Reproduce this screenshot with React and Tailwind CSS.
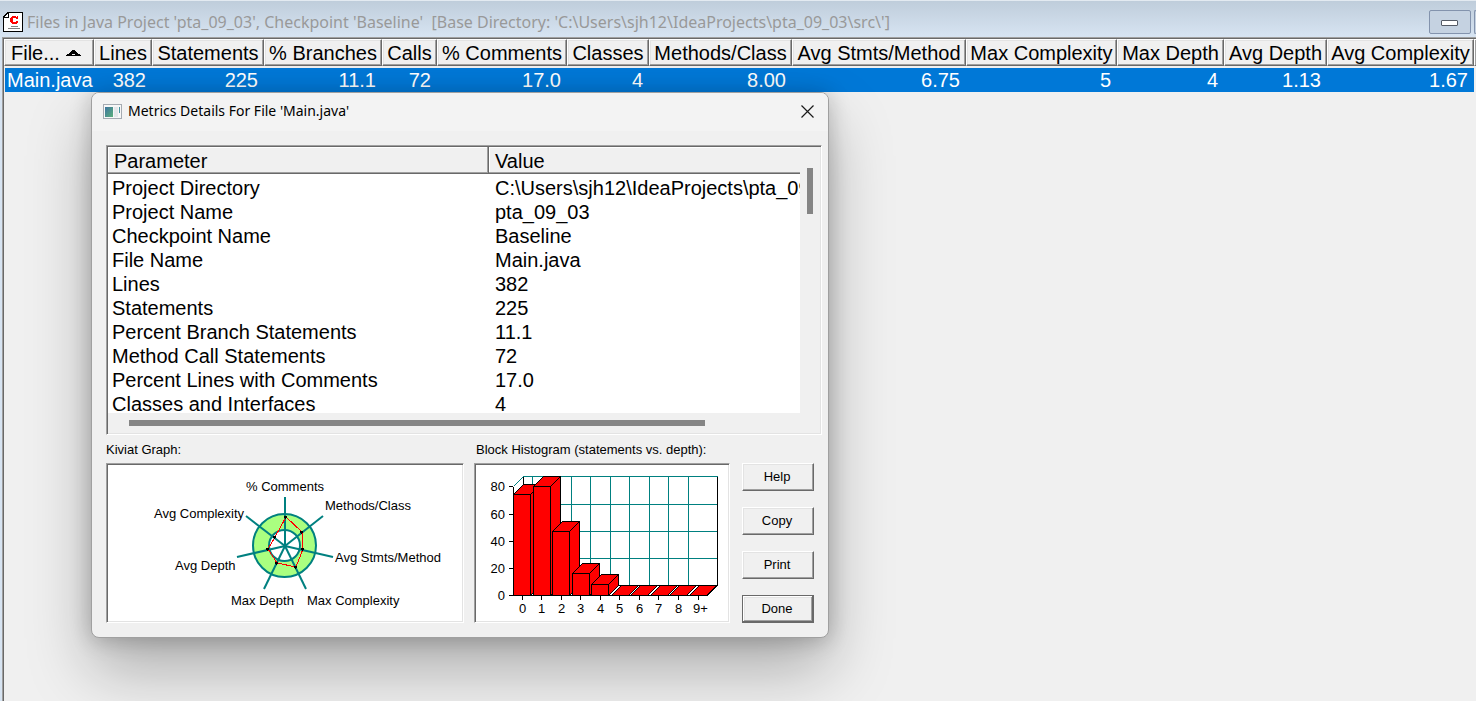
import React from 'react';

const columns = [
    { name: 'File...', value: 'Main.java', width: 90 },
    { name: 'Lines', value: '382', width: 58 },
    { name: 'Statements', value: '225', width: 112 },
    { name: '% Branches', value: '11.1', width: 118 },
    { name: 'Calls', value: '72', width: 55 },
    { name: '% Comments', value: '17.0', width: 130 },
    { name: 'Classes', value: '4', width: 82 },
    { name: 'Methods/Class', value: '8.00', width: 143 },
    { name: 'Avg Stmts/Method', value: '6.75', width: 174 },
    { name: 'Max Complexity', value: '5', width: 151 },
    { name: 'Max Depth', value: '4', width: 107 },
    { name: 'Avg Depth', value: '1.13', width: 103 },
    { name: 'Avg Complexity', value: '1.67', width: 147 },
];

const details = [
    ['Project Directory', 'C:\\Users\\sjh12\\IdeaProjects\\pta_09_03\\src\\'],
    ['Project Name', 'pta_09_03'],
    ['Checkpoint Name', 'Baseline'],
    ['File Name', 'Main.java'],
    ['Lines', '382'],
    ['Statements', '225'],
    ['Percent Branch Statements', '11.1'],
    ['Method Call Statements', '72'],
    ['Percent Lines with Comments', '17.0'],
    ['Classes and Interfaces', '4'],
];

const headerCell =
    'h-[27px] p-0 pt-px font-normal whitespace-nowrap bg-[#f0f0f0] border-t border-l border-white border-r border-b border-r-[#696969] border-b-[#696969] shadow-[inset_-1px_-1px_0_#a0a0a0,inset_1px_1px_0_#e3e3e3]';

const sunken =
    'border border-t-[#a0a0a0] border-l-[#a0a0a0] border-r-white border-b-white shadow-[inset_1px_1px_0_#696969,inset_-1px_-1px_0_#e3e3e3]';

const ProjectIcon = () => (
    <svg width="20" height="20" viewBox="0 0 20 20" shapeRendering="crispEdges">
        <path d="M5.5 0.5H19.5V19.5H0.5V5.5Z" fill="#fff" stroke="#000" />
        <path d="M0 6V4H1V3H2V2H3V1H4V0H6V6Z" fill="#000" />
        <path d="M2 4H3V3H4V2H5V5H2Z" fill="#fff" />
        <path d="M9 4H13V5H14V4H15V7H13V6H10V10H13V9H15V11H14V12H9V11H8V10H7V6H8V5H9Z" fill="#f00" />
        <path d="M8 14.5H15M5 16.5H17" stroke="#808080" />
    </svg>
);

const DialogIcon = () => (
    <svg width="19" height="15" viewBox="0 0 19 15" shapeRendering="crispEdges">
        <defs>
            <linearGradient id="pane" x1="0" y1="0" x2="1" y2="1">
                <stop offset="0" stopColor="#3d74a0" />
                <stop offset="1" stopColor="#5cb07c" />
            </linearGradient>
        </defs>
        <rect x="0.5" y="0.5" width="18" height="14" fill="#f7f7f7" stroke="#a5abb2" />
        <rect x="2" y="3" width="8" height="10" fill="url(#pane)" />
        <rect x="11" y="3" width="4" height="10" fill="#e4e7ea" />
        <rect x="16" y="3" width="1" height="6" fill="#4a94a0" />
    </svg>
);

const SortArrow = () => (
    <svg width="15" height="6" viewBox="0 0 15 6" shapeRendering="crispEdges" className="shrink-0">
        <path d="M0 6V5H1V4H3V3H4V2H5V1H6V0H9V1H10V2H11V3H12V4H14V5H15V6Z" fill="#000" />
        <path d="M6 4H9V5H6Z" fill="#f0f0f0" />
    </svg>
);

const spokes = [
    [177, 32],
    [215, 51],
    [225, 92],
    [198, 124],
    [156, 124],
    [129, 92],
    [138, 51],
];

const scores = [
    [178, 52],
    [194, 67],
    [195, 84],
    [188, 102],
    [169, 98],
    [160, 84],
    [167, 72],
];

const kiviatLabels = [
    ['% Comments', 138, 26],
    ['Methods/Class', 217, 45],
    ['Avg Stmts/Method', 227, 97],
    ['Max Complexity', 199, 140],
    ['Max Depth', 123, 140],
    ['Avg Depth', 67, 105],
    ['Avg Complexity', 46, 53],
];

const KiviatGraph = () => (
    <svg width="354" height="156" viewBox="0 0 354 156" className="block text-[13px]">
        <g fill="none">
            <circle cx="176.5" cy="80.5" r="24" stroke="#aaff80" strokeWidth="16" />
            <circle cx="176.5" cy="80.5" r="31.5" stroke="#008080" strokeWidth="2" />
            <circle cx="176.5" cy="80.5" r="15.5" stroke="#008080" strokeWidth="2" />
            {spokes.map(([x, y]) => (
                <line key={`${x}-${y}`} x1="177" y1="81" x2={x} y2={y} stroke="#008080" strokeWidth="2" />
            ))}
            <polygon points={scores.map((p) => p.join(',')).join(' ')} stroke="#f00" shapeRendering="crispEdges" />
            {scores.map(([x, y]) => (
                <path key={`${x}-${y}`} d={`M${x - 2} ${y - 1}h3v2h-1v1h-1v-1h-1z`} fill="#000" />
            ))}
        </g>
        {kiviatLabels.map(([label, x, y]) => (
            <text key={label} x={x} y={y}>{label}</text>
        ))}
    </svg>
);

const bars = [
    { x: 37.5, top: 29.5, tick: 46.5 },
    { x: 57.5, top: 21.5, tick: 65.5 },
    { x: 76.5, top: 66.5, tick: 85.5 },
    { x: 96.5, top: 108.5, tick: 104.5 },
    { x: 115.5, top: 119.5, tick: 124.5 },
    { x: 135.5, top: 130.5, tick: 143.5 },
    { x: 154.5, top: 130.5, tick: 163.5 },
    { x: 174.5, top: 130.5, tick: 182.5 },
    { x: 193.5, top: 130.5, tick: 202.5 },
    { x: 213.5, top: 130.5, tick: 222.5 },
];

const yTicks = [
    ['80', 21.5],
    ['60', 49.5],
    ['40', 76.5],
    ['20', 103.5],
    ['0', 130.5],
];

const Histogram = () => (
    <svg width="252" height="156" viewBox="0 0 252 156" className="block text-[13px]">
        <g shapeRendering="crispEdges" fill="none">
            <path
                d="M47.5 11.5H241.5M47.5 39.5H241.5M47.5 66.5H241.5M47.5 93.5H241.5M56.5 11.5V120M75.5 11.5V120M95.5 11.5V120M114.5 11.5V120M134.5 11.5V120M153.5 11.5V120M173.5 11.5V120M192.5 11.5V120M212.5 11.5V120M37.5 21.5L47.5 11.5"
                stroke="#008080"
            />
            <path d="M47.5 11.5V30M241.5 11.5V120.5H48M37.5 21.5V130.5M33 130.5H231.5L241.5 120.5" stroke="#000" />
            {bars.map(({ x, top }) => (
                <g key={x} fill="#f00" stroke="#000">
                    <path d={`M${x} ${top}l10 -10h17l-10 10z`} />
                    <path d={`M${x + 17} ${top}l10 -10V120.5l-10 10z`} />
                    <path d={`M${x} ${top}h17V130.5h-17z`} />
                </g>
            ))}
            {yTicks.map(([label, y]) => (
                <line key={label} x1="33" y1={y} x2="37" y2={y} stroke="#000" />
            ))}
            {bars.map(({ tick }) => (
                <line key={tick} x1={tick} y1="131" x2={tick} y2="135" stroke="#000" />
            ))}
        </g>
        {yTicks.map(([label, y]) => (
            <text key={label} x="29" y={y + 4.5} textAnchor="end">{label}</text>
        ))}
        {bars.map(({ tick }, i) => (
            <text key={tick} x={i === 9 ? tick + 2 : tick} y="148" textAnchor="middle">
                {i === 9 ? '9+' : i}
            </text>
        ))}
    </svg>
);

const DialogButton = ({ children, primary }) => (
    <button
        type="button"
        className={
            primary
                ? 'h-7 w-[72px] border border-[#696969] bg-[#f0f0f0] pr-0.5 shadow-[inset_-1px_-1px_0_#696969,inset_1px_1px_0_#fff,inset_-2px_-2px_0_#a0a0a0,inset_2px_2px_0_#e3e3e3]'
                : 'h-7 w-[72px] border border-t-white border-l-white border-r-[#696969] border-b-[#696969] bg-[#f0f0f0] pr-0.5 shadow-[inset_-1px_-1px_0_#a0a0a0,inset_1px_1px_0_#e3e3e3]'
        }
    >
        {children}
    </button>
);

const MetricsDialog = () => (
    <section
        role="dialog"
        aria-labelledby="dialog-title"
        className="absolute top-[92px] left-[91px] w-[738px] overflow-hidden rounded-lg border border-[#a0a0a0] bg-[#f0f0f0] text-[13px] shadow-[0_32px_64px_rgba(0,0,0,0.28),0_2px_21px_rgba(0,0,0,0.22)]"
    >
        <header className="flex h-[38px] items-center gap-1.5 bg-[#f3f3f3] pr-3.5 pb-0.5 pl-[11px]">
            <DialogIcon />
            <h2 id="dialog-title" className="font-['Noto_Sans',sans-serif] text-sm">
                Metrics Details For File 'Main.java'
            </h2>
            <button type="button" aria-label="Close" className="ml-auto">
                <svg width="13" height="13" viewBox="0 0 13 13" className="block">
                    <path d="M0.5 0.5L12.5 12.5M12.5 0.5L0.5 12.5" stroke="#1a1a1a" strokeWidth="1.2" />
                </svg>
            </button>
        </header>

        <div className="px-3.5 pt-3.5 pb-3.5">
            <div className={`mr-[-8px] w-[716px] p-px ${sunken}`}>
                <div className="flex">
                    <div className="h-[266px] flex-1 overflow-hidden bg-white">
                        <table className="w-full table-fixed border-separate border-spacing-0 text-left text-xl leading-6">
                            <colgroup>
                                <col className="w-[381px]" />
                                <col />
                            </colgroup>
                            <thead>
                                <tr>
                                    <th className="h-[27px] border-r border-b border-[#696969] bg-[#f0f0f0] p-0 pt-0.5 pl-1.5 font-normal shadow-[inset_-1px_-1px_0_#a0a0a0,inset_1px_1px_0_#fff]">
                                        Parameter
                                    </th>
                                    <th className="h-[27px] border-b border-[#696969] bg-[#f0f0f0] p-0 pt-0.5 pl-1.5 font-normal shadow-[inset_0_-1px_0_#a0a0a0,inset_1px_1px_0_#fff]">
                                        Value
                                    </th>
                                </tr>
                            </thead>
                            <tbody>
                                <tr aria-hidden="true"><td className="h-0.5 p-0" /></tr>
                                {details.map(([name, value]) => (
                                    <tr key={name}>
                                        <td className="h-6 p-0 pl-1 whitespace-nowrap">{name}</td>
                                        <td className="h-6 overflow-hidden p-0 pl-1.5 whitespace-nowrap">{value}</td>
                                    </tr>
                                ))}
                            </tbody>
                        </table>
                    </div>
                    <div className="w-5 pt-[21px] pl-[7px]">
                        <div className="h-[46px] w-1.5 bg-[#858585]" />
                    </div>
                </div>
                <div className="h-5 pt-[7px] pl-[21px]">
                    <div className="h-1.5 w-[576px] bg-[#858585]" />
                </div>
            </div>

            <div className="mt-1.5 flex">
                <figure>
                    <figcaption className="h-[22px] leading-[18px]">Kiviat Graph:</figcaption>
                    <div className={`bg-white p-px ${sunken}`}>
                        <KiviatGraph />
                    </div>
                </figure>
                <figure className="ml-2.5">
                    <figcaption className="h-[22px] pl-0.5 leading-[18px]">Block Histogram (statements vs. depth):</figcaption>
                    <div className={`bg-white p-px ${sunken}`}>
                        <Histogram />
                    </div>
                </figure>
                <div className="ml-3 flex flex-col justify-end gap-4">
                    <DialogButton>Help</DialogButton>
                    <DialogButton>Copy</DialogButton>
                    <DialogButton>Print</DialogButton>
                    <DialogButton primary>Done</DialogButton>
                </div>
            </div>
        </div>
    </section>
);

const App = () => {
    return (
        <main className="relative flex min-h-screen flex-col overflow-hidden bg-[#f0f0f0] font-['Liberation_Sans',Arial,sans-serif] text-black">
            <header className="flex h-[37px] items-center border-t border-[#e3eaf1] bg-linear-to-b from-[#bfcddb] to-[#d7e4f2] pt-1.5 pl-[3px]">
                <ProjectIcon />
                <h1 className="pl-1 font-['Noto_Sans',sans-serif] text-base whitespace-pre text-[#999999]">
                    {"Files in Java Project 'pta_09_03', Checkpoint 'Baseline'  [Base Directory: 'C:\\Users\\sjh12\\IdeaProjects\\pta_09_03\\src\\']"}
                </h1>
                <div className="ml-auto flex gap-[3px]">
                    <button
                        type="button"
                        aria-label="Minimize"
                        className="flex h-6 w-[42px] items-center justify-center rounded-xs border border-[#8393ad] bg-[#c5d2e1] pt-0.5 pr-0.5"
                    >
                        <span className="h-1.5 w-[17px] rounded-[1px] border border-[#555b66] bg-white" />
                    </button>
                    <button
                        type="button"
                        aria-label="Restore"
                        className="h-6 w-0.5 rounded-l-xs border border-r-0 border-[#8393ad] bg-[#c5d2e1]"
                    />
                </div>
            </header>

            <div className="flex-1 border-l-2 border-[#d7e4f2]">
                <div className="min-h-[664px] overflow-hidden border-t border-l border-[#a0a0a0] shadow-[inset_1px_1px_0_#696969]">
                    <table className="mt-px ml-px w-full table-fixed border-separate border-spacing-0 text-xl leading-6">
                        <colgroup>
                            {columns.map((c) => (
                                <col key={c.name} style={{ width: c.width }} />
                            ))}
                            <col />
                        </colgroup>
                        <thead>
                            <tr>
                                {columns.map((c, i) => (
                                    <th key={c.name} className={headerCell}>
                                        {i === 0 ? (
                                            <span className="flex items-center gap-1.5 pl-1.5">
                                                {c.name}
                                                <SortArrow />
                                            </span>
                                        ) : (
                                            <span className="flex justify-center">{c.name}</span>
                                        )}
                                    </th>
                                ))}
                                <th className={headerCell} />
                            </tr>
                        </thead>
                        <tbody>
                            <tr aria-hidden="true"><td className="h-0.5 p-0" /></tr>
                            <tr className="text-white">
                                {columns.map((c, i) => (
                                    <td
                                        key={c.name}
                                        className={
                                            i === 0
                                                ? 'h-6 border-l border-[#f0f0f0] bg-[#0078d7] p-0 pl-0.5'
                                                : 'h-6 bg-[#0078d7] p-0 pr-1.5 text-right'
                                        }
                                    >
                                        {c.value}
                                    </td>
                                ))}
                                <td className="p-0" />
                            </tr>
                        </tbody>
                    </table>
                </div>
            </div>

            <MetricsDialog />
        </main>
    );
};

export default App;
